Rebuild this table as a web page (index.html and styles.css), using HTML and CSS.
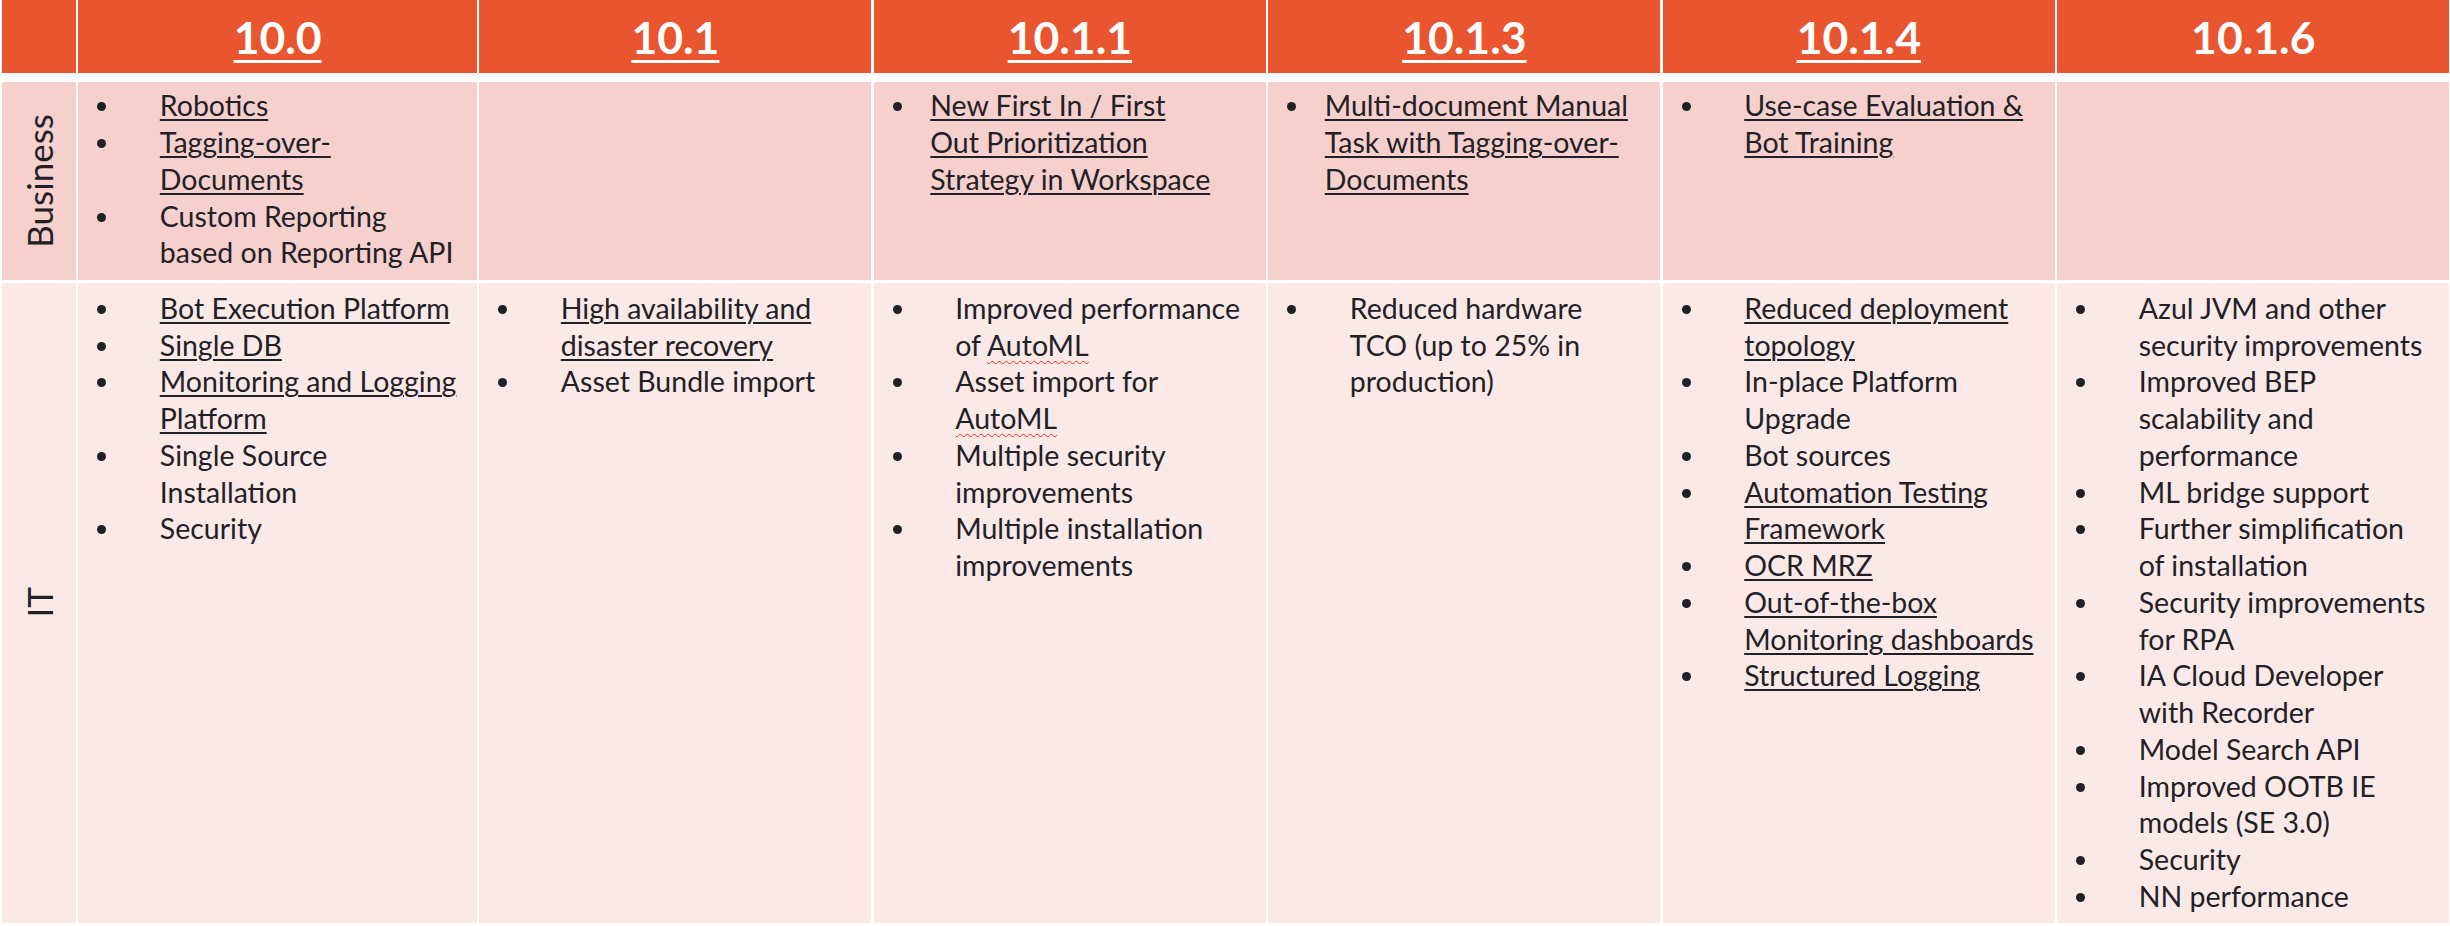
FILE: index.html
```html
<!DOCTYPE html>
<html lang="en">
<head>
<meta charset="utf-8">
<title>Release features</title>
<link rel="stylesheet" href="styles.css">
</head>
<body>
<div class="table">
  <div class="row row-head">
    <div class="head-cell"></div>
    <div class="head-cell"><span class="ver">10.0</span></div>
    <div class="head-cell"><span class="ver">10.1</span></div>
    <div class="head-cell"><span class="ver">10.1.1</span></div>
    <div class="head-cell"><span class="ver">10.1.3</span></div>
    <div class="head-cell"><span class="ver">10.1.4</span></div>
    <div class="head-cell"><span class="ver-plain">10.1.6</span></div>
  </div>

  <div class="row row-business">
    <div class="cell label"><span class="label-text">Business</span></div>
    <div class="cell">
      <ul class="items">
        <li class="item"><span class="link">Robotics</span></li>
        <li class="item"><span class="link">Tagging-over-<br>Documents</span></li>
        <li class="item"><span>Custom Reporting<br>based on Reporting API</span></li>
      </ul>
    </div>
    <div class="cell"></div>
    <div class="cell">
      <ul class="items items-tight">
        <li class="item"><span class="link">New First In / First<br>Out Prioritization<br>Strategy in Workspace</span></li>
      </ul>
    </div>
    <div class="cell">
      <ul class="items items-tight">
        <li class="item"><span class="link">Multi-document Manual<br>Task with Tagging-over-<br>Documents</span></li>
      </ul>
    </div>
    <div class="cell">
      <ul class="items">
        <li class="item"><span class="link">Use-case Evaluation &amp;<br>Bot Training</span></li>
      </ul>
    </div>
    <div class="cell"></div>
  </div>

  <div class="row row-it">
    <div class="cell label"><span class="label-text">IT</span></div>
    <div class="cell">
      <ul class="items">
        <li class="item"><span class="link">Bot Execution Platform</span></li>
        <li class="item"><span class="link">Single DB</span></li>
        <li class="item"><span class="link">Monitoring and Logging<br>Platform</span></li>
        <li class="item"><span>Single Source<br>Installation</span></li>
        <li class="item"><span>Security</span></li>
      </ul>
    </div>
    <div class="cell">
      <ul class="items">
        <li class="item"><span class="link">High availability and<br>disaster recovery</span></li>
        <li class="item"><span>Asset Bundle import</span></li>
      </ul>
    </div>
    <div class="cell">
      <ul class="items">
        <li class="item"><span>Improved performance<br>of <span class="spell">AutoML</span></span></li>
        <li class="item"><span>Asset import for<br><span class="spell">AutoML</span></span></li>
        <li class="item"><span>Multiple security<br>improvements</span></li>
        <li class="item"><span>Multiple installation<br>improvements</span></li>
      </ul>
    </div>
    <div class="cell">
      <ul class="items">
        <li class="item"><span>Reduced hardware<br>TCO (up to 25% in<br>production)</span></li>
      </ul>
    </div>
    <div class="cell">
      <ul class="items">
        <li class="item"><span class="link">Reduced deployment<br>topology</span></li>
        <li class="item"><span>In-place Platform<br>Upgrade</span></li>
        <li class="item"><span>Bot sources</span></li>
        <li class="item"><span class="link">Automation Testing<br>Framework</span></li>
        <li class="item"><span class="link">OCR MRZ</span></li>
        <li class="item"><span class="link">Out-of-the-box<br>Monitoring dashboards</span></li>
        <li class="item"><span class="link">Structured Logging</span></li>
      </ul>
    </div>
    <div class="cell">
      <ul class="items">
        <li class="item"><span>Azul JVM and other<br>security improvements</span></li>
        <li class="item"><span>Improved BEP<br>scalability and<br>performance</span></li>
        <li class="item"><span>ML bridge support</span></li>
        <li class="item"><span>Further simplification<br>of installation</span></li>
        <li class="item"><span>Security improvements<br>for RPA</span></li>
        <li class="item"><span>IA Cloud Developer<br>with Recorder</span></li>
        <li class="item"><span>Model Search API</span></li>
        <li class="item"><span>Improved OOTB IE<br>models (SE 3.0)</span></li>
        <li class="item"><span>Security</span></li>
        <li class="item"><span>NN performance</span></li>
      </ul>
    </div>
  </div>
</div>
</body>
</html>
```
FILE: styles.css
```css
html, body {
  margin: 0;
  padding: 0;
  background: #ffffff;
}

body {
  font-family: Carlito, Lato, "Open Sans", sans-serif;
  color: #1f2126;
}

.table {
  width: 2450px;
  height: 926px;
  box-sizing: border-box;
  padding: 0 0.5px 3.3px 1.5px;
  display: flex;
  flex-direction: column;
  background: #ffffff;
}

.row {
  display: grid;
  grid-template-columns: 74.5px 398.7px repeat(5, 392.2px);
  column-gap: 2.3px;
}

.row-head {
  height: 73.3px;
  margin-bottom: 8.7px;
  flex: none;
}

.head-cell {
  background: #e9552f;
  color: #ffffff;
  font-family: Lato, "Open Sans", sans-serif;
  font-weight: 700;
  font-size: 44.5px;
  line-height: 73.3px;
  text-align: center;
  white-space: nowrap;
}

.ver {
  text-decoration: underline;
  text-decoration-thickness: 3.4px;
  text-underline-offset: 6px;
}

.row-business {
  height: 198px;
  margin-bottom: 2.7px;
  flex: none;
}

.row-business .cell {
  background: #f6d0cd;
  padding: 5.4px 0 0 19px;
}

.row-it {
  flex: 1;
}

.row-it .cell {
  background: #fbe9e8;
  padding: 7.2px 0 0 19px;
}

.row .label {
  padding: 0;
  display: flex;
  align-items: center;
  justify-content: center;
}

.label-text {
  font-family: Lato, "Open Sans", sans-serif;
  writing-mode: vertical-rl;
  transform: rotate(180deg);
  font-size: 35px;
  line-height: 1.2;
  white-space: nowrap;
}

.items {
  list-style: none;
  margin: 0;
  padding: 0;
  font-family: Lato, "Open Sans", sans-serif;
  font-size: 28.5px;
  line-height: 36.75px;
  white-space: nowrap;
}

.item {
  display: grid;
  grid-template-columns: 62.5px auto;
  align-items: start;
}

.items-tight .item {
  grid-template-columns: 37.5px auto;
}

.item::before {
  content: "";
  width: 9px;
  height: 9px;
  border-radius: 50%;
  background: currentColor;
  margin-top: 15px;
}

.link {
  text-decoration: underline;
  text-decoration-thickness: 2.4px;
  text-underline-offset: 2.8px;
}

.spell {
  text-decoration: underline wavy #e0332b;
  text-decoration-thickness: 1.4px;
  text-underline-offset: 4px;
}
```
